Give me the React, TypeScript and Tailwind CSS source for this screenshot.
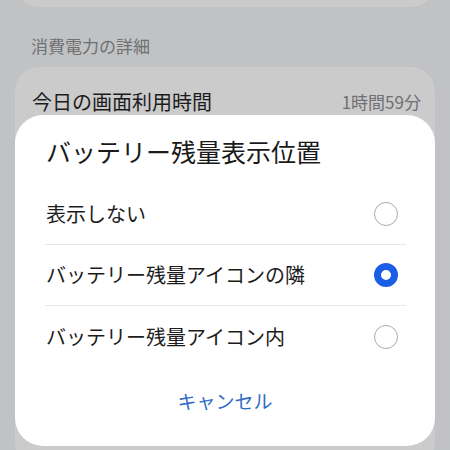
import React from "react";

const options = ["表示しない", "バッテリー残量アイコンの隣", "バッテリー残量アイコン内"];

function Radio({ checked }: { checked: boolean }) {
  if (checked) {
    return <span className="mr-2 block h-[24px] w-[24px] rounded-full border-[7px] border-[#1a5ee6] bg-white" />;
  }
  return <span className="mr-2 block h-[24px] w-[24px] rounded-full border-[1.5px] border-[#a9a9a9] bg-white" />;
}

export default function App() {
  const selected = 1;

  return (
    <div className="relative h-[450px] w-[450px] overflow-hidden bg-[#c1c2c4] font-['Noto_Sans_CJK_JP',sans-serif]">
      {/* Background settings page */}
      <div className="mx-[15px] -mt-[40px] h-[47px] rounded-[24px] bg-[#cbcbcc]" />
      <div className="px-[31px] pt-[27px] text-[17px] leading-[24px] text-[#6f7072]">消費電力の詳細</div>
      <div className="mx-[15px] mt-[9px] h-[400px] rounded-[24px] bg-[#cbcbcc] pl-[17px] pr-[14px] pt-[21px]">
        <div className="flex items-center justify-between">
          <span className="text-[20px] leading-[28px] text-[#1c1c1c]">今日の画面利用時間</span>
          <span className="text-[17px] leading-[28px] text-[#6f7072]">1時間59分</span>
        </div>
      </div>

      {/* Dialog */}
      <div className="absolute left-[15px] top-[115px] h-[331px] w-[420px] rounded-[28px] bg-white">
        <div className="px-[31px] pt-[21px] text-[25px] leading-[30px] text-[#1a1a1a]">バッテリー残量表示位置</div>
        <div className="ml-[30px] mr-[29px] mt-[18px]">
          {options.map((label, i) => (
            <div
              key={label}
              className={
                i < options.length - 1
                  ? "flex h-[61px] items-center justify-between border-b border-[#e6e6e6]"
                  : "flex h-[61px] items-center justify-between"
              }
            >
              <span className="pl-[1px] text-[20px] text-[#1c1c1c]">{label}</span>
              <Radio checked={i === selected} />
            </div>
          ))}
        </div>
        <div className="mt-[20px] text-center text-[19px] leading-[28px] text-[#2f6cc6]">キャンセル</div>
      </div>
    </div>
  );
}
